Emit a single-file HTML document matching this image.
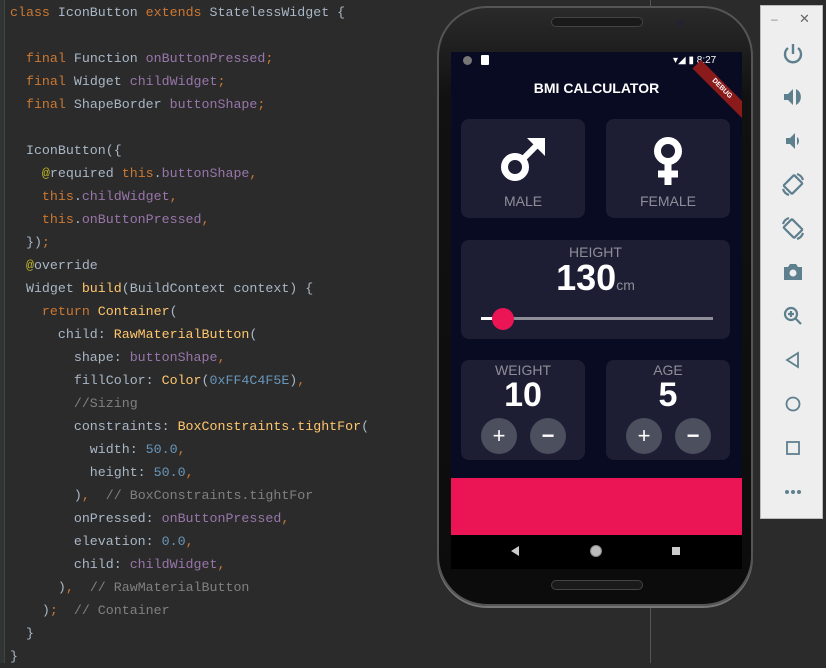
<!DOCTYPE html>
<html><head><meta charset="utf-8"><style>
*{margin:0;padding:0;box-sizing:border-box}
body{width:826px;height:663px;background:#2b2b2b;position:relative;overflow:hidden;font-family:"Liberation Sans",sans-serif}
.code{position:absolute;left:10px;top:1px;font-family:"Liberation Mono",monospace;font-size:13.3px;line-height:23px;color:#a9b7c6;white-space:pre}
.k{color:#cc7832}.f{color:#9876aa}.y{color:#ffc66d}.n{color:#6897bb}.c{color:#808080}.a{color:#bbb529}
.gut{position:absolute;left:0;top:0;width:5px;height:663px;background:#313335;border-right:1px solid #3c4a3c}
.vl{position:absolute;left:650px;top:0;width:1px;height:663px;background:#555}
.phone{position:absolute;left:437px;top:6px;width:316px;height:600px;border-radius:50px;background:linear-gradient(#2a2a2a,#111 15%,#0c0c0c);border:2px solid #555;box-shadow:0 2px 0 #777}
.scr{position:absolute;left:451px;top:52px;width:291px;height:517px;background:#090b22;overflow:hidden}
.card{position:absolute;background:#1d1e33;border-radius:8px;color:#8d8e98;text-align:center}
.lbl{font-size:14px}
.big{color:#fff;font-weight:bold;font-size:34px}
.btn{position:absolute;width:36px;height:36px;border-radius:50%;background:#4c4f5e;color:#fff;font-size:22px;line-height:36px;text-align:center}
.side{position:absolute;left:760px;top:5px;width:63px;height:514px;background:#eeeeee;border:1px solid #bbb}
.ic{position:absolute;left:20px;width:24px;height:24px}
</style></head><body>
<div class="gut"></div>
<div class="vl"></div>
<div class="code"><span class="k">class</span> IconButton <span class="k">extends</span> StatelessWidget {

  <span class="k">final</span> Function <span class="f">onButtonPressed</span><span class="k">;</span>
  <span class="k">final</span> Widget <span class="f">childWidget</span><span class="k">;</span>
  <span class="k">final</span> ShapeBorder <span class="f">buttonShape</span><span class="k">;</span>

  IconButton({
    <span class="a">@</span>required <span class="k">this</span>.<span class="f">buttonShape</span><span class="k">,</span>
    <span class="k">this</span>.<span class="f">childWidget</span><span class="k">,</span>
    <span class="k">this</span>.<span class="f">onButtonPressed</span><span class="k">,</span>
  })<span class="k">;</span>
  <span class="a">@</span>override
  Widget <span class="y">build</span>(BuildContext context) {
    <span class="k">return</span> <span class="y">Container</span>(
      child: <span class="y">RawMaterialButton</span>(
        shape: <span class="f">buttonShape</span><span class="k">,</span>
        fillColor: <span class="y">Color</span>(<span class="n">0xFF4C4F5E</span>)<span class="k">,</span>
        <span class="c">//Sizing</span>
        constraints: <span class="y">BoxConstraints.tightFor</span>(
          width: <span class="n">50.0</span><span class="k">,</span>
          height: <span class="n">50.0</span><span class="k">,</span>
        )<span class="k">,</span>  <span class="c">// BoxConstraints.tightFor</span>
        onPressed: <span class="f">onButtonPressed</span><span class="k">,</span>
        elevation: <span class="n">0.0</span><span class="k">,</span>
        child: <span class="f">childWidget</span><span class="k">,</span>
      )<span class="k">,</span>  <span class="c">// RawMaterialButton</span>
    )<span class="k">;</span>  <span class="c">// Container</span>
  }
}</div>

<div class="phone"></div>
<div style="position:absolute;left:551px;top:17px;width:92px;height:10px;border-radius:5px;background:#1a1a1a;border:1px solid #444"></div>
<div style="position:absolute;left:551px;top:580px;width:92px;height:10px;border-radius:5px;background:#1a1a1a;border:1px solid #444"></div>
<div style="position:absolute;left:678px;top:20px;width:6px;height:6px;border-radius:50%;background:#223"></div>
<div class="scr">
  <div style="position:absolute;left:12px;top:4px;width:9px;height:9px;border-radius:50%;background:#777"></div>
  <div style="position:absolute;left:30px;top:3px;width:8px;height:10px;background:#fff;border-radius:1px"></div>
  <div style="position:absolute;left:222px;top:3px;font-size:10px;color:#fff">▾◢ ▮ 8:27</div>
  <div style="position:absolute;left:250px;top:8px;width:70px;height:12px;background:#8b1a1a;transform:rotate(45deg);transform-origin:left top;color:#fff;font-size:7px;text-align:center;line-height:12px;font-weight:bold">DEBUG</div>
  <div style="position:absolute;left:0;width:291px;top:28px;text-align:center;color:#fff;font-size:14px;font-weight:bold">BMI CALCULATOR</div>
  <div class="card" style="left:10px;top:67px;width:124px;height:99px">
    <svg width="124" height="70" viewBox="0 0 124 70" style="position:absolute;left:0;top:0"><circle cx="54" cy="48" r="10.5" fill="none" stroke="#fff" stroke-width="7"/><path d="M61 41L79 23" stroke="#fff" stroke-width="6"/><path d="M66 19H84V37Z" fill="#fff"/></svg>
    <div class="lbl" style="position:absolute;top:74px;width:100%">MALE</div></div>
  <div class="card" style="left:155px;top:67px;width:124px;height:99px">
    <svg width="124" height="70" viewBox="0 0 124 70" style="position:absolute;left:0;top:0"><circle cx="62" cy="32" r="10.5" fill="none" stroke="#fff" stroke-width="7"/><path d="M62 42V66M52 55H72" stroke="#fff" stroke-width="7"/></svg>
    <div class="lbl" style="position:absolute;top:74px;width:100%">FEMALE</div></div>
  <div class="card" style="left:10px;top:188px;width:269px;height:99px">
    <div class="lbl" style="position:absolute;top:4px;width:100%">HEIGHT</div>
    <div style="position:absolute;top:17px;width:100%"><span class="big" style="font-size:36px">130</span><span style="font-size:14px">cm</span></div>
    <div style="position:absolute;left:20px;top:77px;width:232px;height:3px;background:#8d8e98"></div>
    <div style="position:absolute;left:20px;top:77px;width:22px;height:3px;background:#fff"></div>
    <div style="position:absolute;left:31px;top:68px;width:22px;height:22px;border-radius:50%;background:#eb1555"></div>
  </div>
  <div class="card" style="left:10px;top:308px;width:124px;height:100px">
    <div class="lbl" style="position:absolute;top:2px;width:100%">WEIGHT</div>
    <div class="big" style="position:absolute;top:16px;width:100%">10</div>
    <div class="btn" style="left:20px;top:58px">+</div><div class="btn" style="left:69px;top:58px;font-weight:bold">−</div></div>
  <div class="card" style="left:155px;top:308px;width:124px;height:100px">
    <div class="lbl" style="position:absolute;top:2px;width:100%">AGE</div>
    <div class="big" style="position:absolute;top:16px;width:100%">5</div>
    <div class="btn" style="left:20px;top:58px">+</div><div class="btn" style="left:69px;top:58px;font-weight:bold">−</div></div>
  <div style="position:absolute;left:0;top:426px;width:291px;height:57px;background:#eb1555"></div>
  <div style="position:absolute;left:0;top:483px;width:291px;height:34px;background:#000"></div>
  <div style="position:absolute;left:60px;top:494px;width:0;height:0;border-top:5px solid transparent;border-bottom:5px solid transparent;border-right:8px solid #ccc"></div>
  <div style="position:absolute;left:139px;top:493px;width:12px;height:12px;border-radius:50%;background:#bbb;border:1px solid #888"></div>
  <div style="position:absolute;left:221px;top:495px;width:8px;height:8px;background:#ccc"></div>
</div>

<div class="side">
  <div style="position:absolute;left:10px;top:6px;color:#888;font-size:12px">–</div>
  <div style="position:absolute;left:38px;top:5px;color:#666;font-size:13px">✕</div>
  <svg class="ic" style="top:36px" viewBox="0 0 24 24" fill="none" stroke="#5e7f8e" stroke-width="2.4"><path d="M7 6A8 8 0 1 0 17 6"/><path d="M12 2V12"/></svg>
  <svg class="ic" style="top:79px" viewBox="0 0 24 24" fill="#5e7f8e"><path d="M3 9H7L12 4V20L7 15H3Z"/><path d="M15 7A6 6 0 0 1 15 17Z M15 7V4A9 9 0 0 1 15 20V17" /></svg>
  <svg class="ic" style="top:123px" viewBox="0 0 24 24" fill="#5e7f8e"><path d="M5 9H9L14 4V20L9 15H5Z"/><path d="M16 8A5 5 0 0 1 16 16Z"/></svg>
  <svg class="ic" style="top:166px" viewBox="0 0 24 24" fill="none" stroke="#5e7f8e" stroke-width="2.2"><rect x="6" y="5" width="12" height="15" rx="1" transform="rotate(45 12 12.5)"/><path d="M16 2A9 9 0 0 1 22 8M8 23A9 9 0 0 1 2 17"/></svg>
  <svg class="ic" style="top:210px" viewBox="0 0 24 24" fill="none" stroke="#5e7f8e" stroke-width="2.2"><rect x="6" y="5" width="12" height="15" rx="1" transform="rotate(-45 12 12.5)"/><path d="M8 2A9 9 0 0 0 2 8M16 23A9 9 0 0 0 22 17"/></svg>
  <svg class="ic" style="top:254px" viewBox="0 0 24 24" fill="#5e7f8e"><path d="M3 7H7L9 4H15L17 7H21V20H3Z"/><circle cx="12" cy="13" r="3.5" fill="#eee"/></svg>
  <svg class="ic" style="top:298px" viewBox="0 0 24 24" fill="none" stroke="#5e7f8e" stroke-width="2.2"><circle cx="10" cy="10" r="6"/><path d="M14.5 14.5L20 20M10 7V13M7 10H13"/></svg>
  <svg class="ic" style="top:342px" viewBox="0 0 24 24" fill="none" stroke="#5e7f8e" stroke-width="1.8"><path d="M17 5V19L6 12Z"/></svg>
  <svg class="ic" style="top:386px" viewBox="0 0 24 24" fill="none" stroke="#5e7f8e" stroke-width="1.8"><circle cx="12" cy="12" r="6.5"/></svg>
  <svg class="ic" style="top:430px" viewBox="0 0 24 24" fill="none" stroke="#5e7f8e" stroke-width="1.8"><rect x="6" y="6" width="12" height="12"/></svg>
  <svg class="ic" style="top:474px" viewBox="0 0 24 24" fill="#5e7f8e"><circle cx="6" cy="12" r="2"/><circle cx="12" cy="12" r="2"/><circle cx="18" cy="12" r="2"/></svg>
</div>
</body></html>
